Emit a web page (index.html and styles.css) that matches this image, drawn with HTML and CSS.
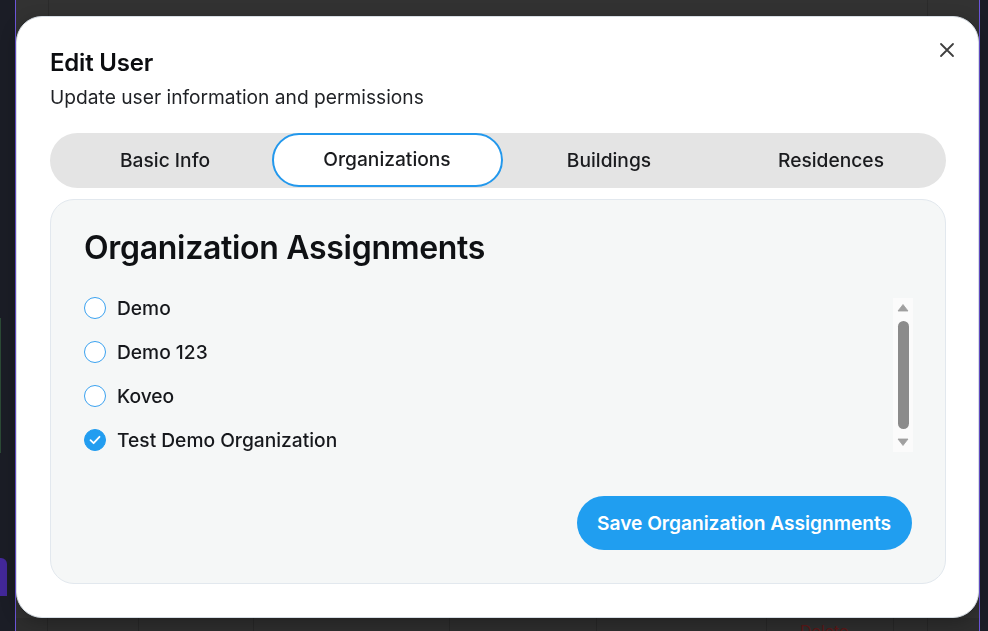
FILE: index.html
```html
<!DOCTYPE html>
<html lang="en">
<head>
<meta charset="utf-8">
<title>Edit User</title>
<link rel="stylesheet" href="styles.css">
</head>
<body>
<div class="app">
  <aside class="sidebar">
    <div class="side-green"></div>
    <div class="side-purple"></div>
  </aside>
  <main class="main">
    <div class="main-top">
      <span class="col-line l1"></span>
      <span class="col-line l2"></span>
    </div>
    <div class="table-row">
      <span class="cell c1"></span>
      <span class="cell c2"></span>
      <span class="cell c3"></span>
      <span class="cell c4"></span>
      <span class="cell c5"></span>
      <span class="cell c6"></span>
      <span class="cell c7"><span class="delete">Delete</span></span>
      <span class="cell c8"></span>
      <span class="cell c9"></span>
    </div>
  </main>
  <aside class="rightbar"></aside>
</div>

<div class="modal" role="dialog" aria-labelledby="modal-title">
  <button class="close" aria-label="Close">
    <svg width="16" height="16" viewBox="0 0 16 16"><path d="M2 2 L14 14 M14 2 L2 14" stroke="#3f3f3f" stroke-width="1.8" stroke-linecap="round" fill="none"/></svg>
  </button>
  <h2 id="modal-title" class="title">Edit User</h2>
  <p class="subtitle">Update user information and permissions</p>

  <nav class="tabs">
    <span class="tab">Basic Info</span>
    <span class="tab active">Organizations</span>
    <span class="tab">Buildings</span>
    <span class="tab">Residences</span>
  </nav>

  <section class="card">
    <h3 class="card-title">Organization Assignments</h3>
    <div class="list-wrap">
      <ul class="list">
        <li class="item"><span class="radio"></span>Demo</li>
        <li class="item"><span class="radio"></span>Demo 123</li>
        <li class="item"><span class="radio"></span>Koveo</li>
        <li class="item"><span class="radio checked"><svg width="12" height="10" viewBox="0 0 12 10"><path d="M1.5 5.2 L4.6 8.2 L10.5 1.8" stroke="#fff" stroke-width="1.8" fill="none" stroke-linecap="round" stroke-linejoin="round"/></svg></span>Test Demo Organization</li>
      </ul>
      <div class="scrollbar" aria-hidden="true">
        <svg class="arrow" width="12" height="9" viewBox="0 0 12 9"><path d="M6 1.5 L11 8 L1 8 Z" fill="#a0a0a0" stroke="#a0a0a0" stroke-width="0.8" stroke-linejoin="round"/></svg>
        <div class="thumb"></div>
        <svg class="arrow" width="12" height="9" viewBox="0 0 12 9"><path d="M1 1 L11 1 L6 7.5 Z" fill="#a0a0a0" stroke="#a0a0a0" stroke-width="0.8" stroke-linejoin="round"/></svg>
      </div>
    </div>
    <div class="actions">
      <button class="save">Save Organization Assignments</button>
    </div>
  </section>
</div>
</body>
</html>
```

FILE: styles.css
```css
* { box-sizing: border-box; }

html, body {
  margin: 0;
  padding: 0;
  width: 988px;
  height: 631px;
  overflow: hidden;
  font-family: Inter, "Noto Sans", "Liberation Sans", sans-serif;
  background: #1a1c24;
}

.app {
  display: flex;
  width: 988px;
  height: 631px;
}

.sidebar {
  width: 16px;
  flex: none;
  background: #1b1d26;
  border-right: 1px solid #6c55d9;
  position: relative;
}

.side-green {
  position: absolute;
  left: 0;
  top: 318px;
  width: 1px;
  height: 135px;
  background: #2c4a36;
}

.side-purple {
  position: absolute;
  left: 0;
  top: 558px;
  width: 7px;
  height: 38px;
  background: #43289a;
  border-radius: 0 6px 0 0;
}

.main {
  width: 963px;
  flex: none;
  display: flex;
  flex-direction: column;
  background: #323232;
}

.main-top {
  flex: 1;
  position: relative;
}

.col-line {
  position: absolute;
  top: 0;
  width: 1px;
  height: 16px;
  background: #2b2b2b;
}
.col-line.l1 { left: 32px; }
.col-line.l2 { left: 911px; }

.table-row {
  height: 13px;
  display: flex;
  background: #2d2d2d;
}

.cell {
  border-right: 1px solid #262626;
  height: 100%;
  position: relative;
  overflow: hidden;
}
.c1 { width: 32px; }
.c2 { width: 91px; }
.c3 { width: 115px; }
.c4 { width: 196px; }
.c5 { width: 147px; }
.c6 { width: 170px; }
.c7 { width: 127px; }
.c8 { width: 34px; }
.c9 { flex: 1; border-right: none; }

.delete {
  position: absolute;
  left: 33px;
  top: 4px;
  font-size: 16px;
  line-height: 18px;
  color: #5a1717;
}

.rightbar {
  flex: 1;
  background: #1b1d26;
  border-left: 1px solid #6c55d9;
}

/* Modal */
.modal {
  position: fixed;
  left: 16px;
  top: 16px;
  width: 963px;
  height: 602px;
  background: #ffffff;
  border-radius: 26px;
  border: 1px solid #d6dde4;
  padding: 31px 32px 33px 33px;
  display: flex;
  flex-direction: column;
  box-shadow: 0 4px 16px rgba(0, 0, 0, 0.25);
}

.close {
  position: absolute;
  right: 21px;
  top: 23px;
  width: 20px;
  height: 20px;
  padding: 2px;
  border: none;
  background: transparent;
  display: flex;
  align-items: center;
  justify-content: center;
}

.title {
  margin: 0;
  font-size: 24px;
  line-height: 30px;
  font-weight: 600;
  color: #0c0d10;
  letter-spacing: -0.2px;
}

.subtitle {
  margin: 7px 0 0;
  font-size: 19.2px;
  line-height: 24px;
  font-weight: 400;
  color: #1f2125;
}

.tabs {
  margin-top: 24px;
  height: 55px;
  background: #e4e4e4;
  border-radius: 28px;
  display: grid;
  grid-template-columns: repeat(4, 1fr);
  padding: 0 4px;
}

.tab {
  display: flex;
  align-items: center;
  justify-content: center;
  font-size: 19.2px;
  font-weight: 500;
  color: #1a1b1e;
  border-radius: 28px;
  padding-bottom: 2px;
}

.tab.active {
  background: #ffffff;
  border: 2.5px solid #2398ec;
  margin: 0 -4.5px 1px;
}

.card {
  margin-top: 11px;
  flex: 1;
  background: #f5f7f7;
  border: 1px solid #e2e8ee;
  border-radius: 24px;
  padding: 30px 33px 33px 33px;
  display: flex;
  flex-direction: column;
}

.card-title {
  margin: 0;
  font-size: 32px;
  line-height: 36px;
  font-weight: 600;
  color: #0f1114;
  letter-spacing: -0.3px;
}

.list-wrap {
  margin-top: 30px;
  height: 156px;
  display: flex;
  justify-content: space-between;
}

.list {
  list-style: none;
  margin: 0;
  padding: 0;
  display: flex;
  flex-direction: column;
  gap: 20px;
}

.item {
  height: 24px;
  display: flex;
  align-items: center;
  gap: 11px;
  font-size: 19.2px;
  font-weight: 500;
  color: #16181c;
}

.radio {
  width: 22px;
  height: 22px;
  border-radius: 50%;
  border: 1.5px solid #3ba2f0;
  background: #ffffff;
  display: flex;
  align-items: center;
  justify-content: center;
  flex: none;
}

.radio.checked {
  background: #229df0;
  border-color: #229df0;
}

.scrollbar {
  width: 20px;
  margin-top: 2px;
  margin-right: -1px;
  background: #fbfbfb;
  display: flex;
  flex-direction: column;
  align-items: center;
  padding: 5px 0 5px;
  gap: 9px;
}

.arrow { flex: none; }

.thumb {
  flex: 1;
  width: 11px;
  background: #8b8b8b;
  border-radius: 6px;
}

.actions {
  margin-top: 44px;
  display: flex;
  justify-content: flex-end;
}

.save {
  height: 54px;
  padding: 0 21px 0 20px;
  border: none;
  border-radius: 28px;
  background: #209ef0;
  color: #ffffff;
  font-family: inherit;
  font-size: 19.2px;
  font-weight: 600;
  letter-spacing: -0.04px;
}
```
